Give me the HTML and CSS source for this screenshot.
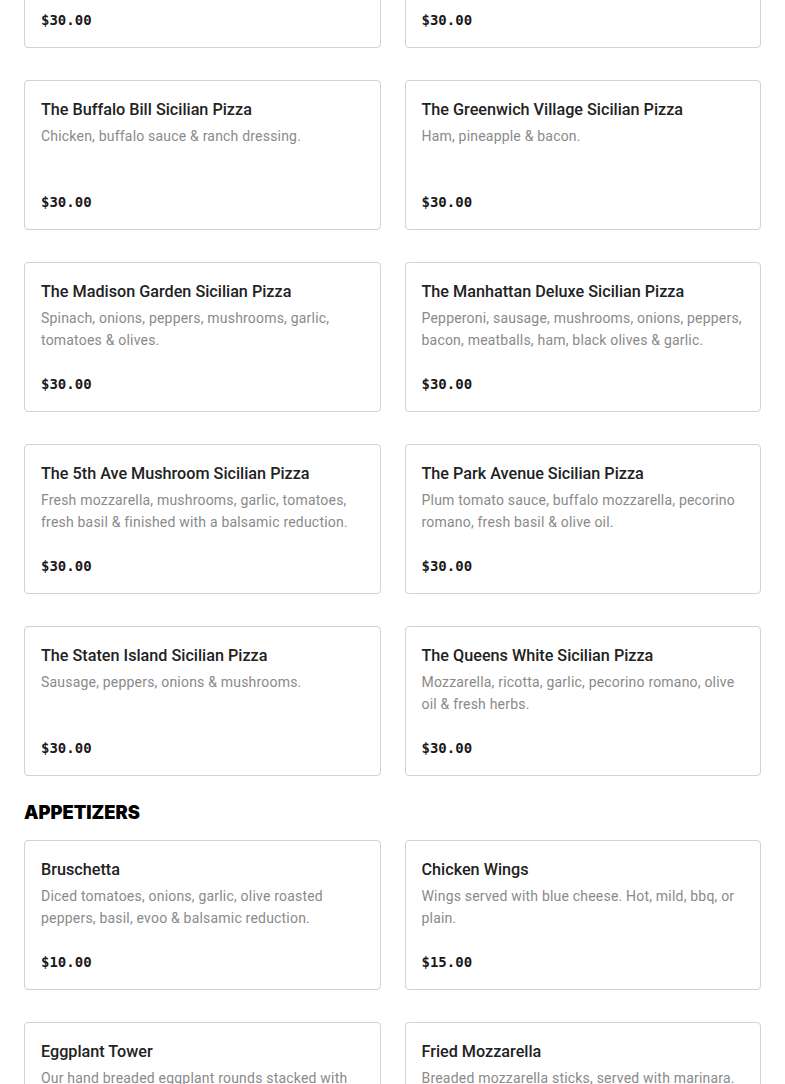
FILE: index.html
```html
<!DOCTYPE html>
<html lang="en">
<head>
<meta charset="utf-8">
<title>Menu</title>
<link rel="stylesheet" href="styles.css">
</head>
<body>
<main class="menu">
  <section class="section section-first">
    <div class="grid">
      <article class="card">
        <h3 class="card-title">The Brooklyn Sicilian Pizza</h3>
        <p class="card-desc">Fresh mozzarella, plum tomato sauce &amp; basil.</p>
        <div class="card-price">$30.00</div>
      </article>
      <article class="card">
        <h3 class="card-title">The Bronx Sicilian Pizza</h3>
        <p class="card-desc">Pepperoni, sausage &amp; meatballs.</p>
        <div class="card-price">$30.00</div>
      </article>
      <article class="card">
        <h3 class="card-title">The Buffalo Bill Sicilian Pizza</h3>
        <p class="card-desc">Chicken, buffalo sauce &amp; ranch dressing.</p>
        <div class="card-price">$30.00</div>
      </article>
      <article class="card">
        <h3 class="card-title">The Greenwich Village Sicilian Pizza</h3>
        <p class="card-desc">Ham, pineapple &amp; bacon.</p>
        <div class="card-price">$30.00</div>
      </article>
      <article class="card">
        <h3 class="card-title">The Madison Garden Sicilian Pizza</h3>
        <p class="card-desc">Spinach, onions, peppers, mushrooms, garlic, tomatoes &amp; olives.</p>
        <div class="card-price">$30.00</div>
      </article>
      <article class="card">
        <h3 class="card-title">The Manhattan Deluxe Sicilian Pizza</h3>
        <p class="card-desc">Pepperoni, sausage, mushrooms, onions, peppers, bacon, meatballs, ham, black olives &amp; garlic.</p>
        <div class="card-price">$30.00</div>
      </article>
      <article class="card">
        <h3 class="card-title">The 5th Ave Mushroom Sicilian Pizza</h3>
        <p class="card-desc">Fresh mozzarella, mushrooms, garlic, tomatoes, fresh basil &amp; finished with a balsamic reduction.</p>
        <div class="card-price">$30.00</div>
      </article>
      <article class="card">
        <h3 class="card-title">The Park Avenue Sicilian Pizza</h3>
        <p class="card-desc">Plum tomato sauce, buffalo mozzarella, pecorino romano, fresh basil &amp; olive oil.</p>
        <div class="card-price">$30.00</div>
      </article>
      <article class="card">
        <h3 class="card-title">The Staten Island Sicilian Pizza</h3>
        <p class="card-desc">Sausage, peppers, onions &amp; mushrooms.</p>
        <div class="card-price">$30.00</div>
      </article>
      <article class="card">
        <h3 class="card-title">The Queens White Sicilian Pizza</h3>
        <p class="card-desc">Mozzarella, ricotta, garlic, pecorino romano, olive oil &amp; fresh herbs.</p>
        <div class="card-price">$30.00</div>
      </article>
    </div>
  </section>
  <section class="section">
    <h2 class="section-title">APPETIZERS</h2>
    <div class="grid">
      <article class="card">
        <h3 class="card-title">Bruschetta</h3>
        <p class="card-desc">Diced tomatoes, onions, garlic, olive roasted peppers, basil, evoo &amp; balsamic reduction.</p>
        <div class="card-price">$10.00</div>
      </article>
      <article class="card">
        <h3 class="card-title">Chicken Wings</h3>
        <p class="card-desc">Wings served with blue cheese. Hot, mild, bbq, or plain.</p>
        <div class="card-price">$15.00</div>
      </article>
      <article class="card">
        <h3 class="card-title">Eggplant Tower</h3>
        <p class="card-desc">Our hand breaded eggplant rounds stacked with fresh mozzarella &amp; marinara.</p>
        <div class="card-price">$12.00</div>
      </article>
      <article class="card">
        <h3 class="card-title">Fried Mozzarella</h3>
        <p class="card-desc">Breaded mozzarella sticks, served with marinara.</p>
        <div class="card-price">$10.00</div>
      </article>
    </div>
  </section>
</main>
</body>
</html>
```
FILE: styles.css
```css
* { box-sizing: border-box; }
html, body { margin: 0; padding: 0; background: #fff; }
body {
  font-family: "Roboto", "Liberation Sans", sans-serif;
  color: #222;
  overflow: hidden;
}
.menu {
  padding: 0 24px;
  margin-top: -102px;
}
.section-title {
  margin: 24px 0 16px;
  font-family: "Inter", "Liberation Sans", sans-serif;
  font-weight: 900;
  font-size: 18.3px;
  line-height: 24px;
  color: #000;
}
.grid {
  display: grid;
  grid-template-columns: 1fr 1fr;
  column-gap: 24px;
  row-gap: 32px;
}
.card {
  border: 1px solid #d2d2d2;
  border-radius: 4px;
  padding: 17px 16px 16px;
  height: 150px;
  display: flex;
  flex-direction: column;
}
.card-title {
  margin: 0;
  font-size: 16.2px;
  font-weight: 500;
  line-height: 24px;
  color: #222;
}
.card-desc {
  margin: 3px 0 0;
  font-size: 14px;
  line-height: 22px;
  letter-spacing: 0.2px;
  color: #8a8a8a;
}
.card-price {
  margin-top: auto;
  font-family: "DejaVu Sans Mono", "Liberation Mono", monospace;
  font-weight: 700;
  font-size: 14px;
  line-height: 22px;
  color: #1a1a1a;
}
```
